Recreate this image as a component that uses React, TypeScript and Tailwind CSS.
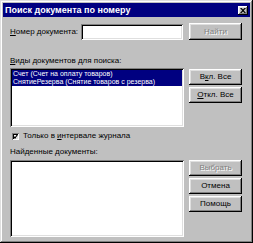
const raised =
  "shadow-[inset_-1px_-1px_#000,inset_1px_1px_#fff,inset_-2px_-2px_#808080,inset_2px_2px_#dfdfdf]";
const sunken =
  "shadow-[inset_1px_1px_#808080,inset_-1px_-1px_#fff,inset_2px_2px_#000,inset_-2px_-2px_#dfdfdf]";

type BtnProps = { children: React.ReactNode; disabled?: boolean; className?: string };

function Btn({ children, disabled, className = "" }: BtnProps) {
  return (
    <div
      className={`flex h-[16px] w-[53px] items-center justify-center bg-[#c0c0c0] ${raised} ${className} ${
        disabled ? "text-[#808080] [text-shadow:1px_1px_#fff]" : "text-black"
      }`}
    >
      {children}
    </div>
  );
}

const kinds = ["Счет (Счет на оплату товаров)", "СнятиеРезерва (Снятие товаров с резерва)"];

export default function App() {
  return (
    <div
      className={`flex h-[243px] w-[253px] flex-col bg-[#c0c0c0] p-[3px] text-[8px] leading-none text-black shadow-[inset_-1px_-1px_#000,inset_1px_1px_#dfdfdf,inset_-2px_-2px_#808080,inset_2px_2px_#fff] [font-family:'Liberation_Sans',Arial,sans-serif]`}
    >
      <div className="flex h-[14px] items-center justify-between bg-[#000080] pl-[2px] pr-[2px]">
        <span className="text-[9px] font-bold text-white">Поиск документа по номеру</span>
        <div className={`flex h-[9px] w-[10px] items-center justify-center bg-[#c0c0c0] ${raised}`}>
          <svg width="6" height="5" viewBox="0 0 6 5">
            <path d="M0 0h1.5l1.5 1.5 1.5-1.5h1.5l-2.2 2.5 2.2 2.5h-1.5l-1.5-1.5-1.5 1.5h-1.5l2.2-2.5z" fill="#000" />
          </svg>
        </div>
      </div>

      <div className="flex flex-col pl-[7px] pr-[7px]">
        <div className="mt-[6px] flex items-center">
          <span className="w-[71px]">
            <u>Н</u>омер документа:
          </span>
          <div className={`h-[16px] w-[102px] bg-white ${sunken}`} />
          <Btn disabled className="ml-[6px] h-[17px]">
            Найти
          </Btn>
        </div>

        <div className="mt-[17px]">
          <u>В</u>иды документов для поиска:
        </div>

        <div className="mt-[3px] flex gap-[5px]">
          <div className={`h-[59px] w-[174px] overflow-hidden bg-white px-[2px] pt-[2px] ${sunken}`}>
            {kinds.map((k) => (
              <div
                key={k}
                className="h-[8px] whitespace-nowrap bg-[#000080] pl-[1px] text-[7px] leading-[8px] text-white"
              >
                {k}
              </div>
            ))}
          </div>
          <div className="mt-[1px] flex flex-col gap-[2px]">
            <Btn>
              В<u>к</u>л. Все
            </Btn>
            <Btn>
              <u>О</u>ткл. Все
            </Btn>
          </div>
        </div>

        <div className="mt-[5px] flex items-center gap-[4px] pl-[2px]">
          <div className={`flex h-[7px] w-[7px] items-center justify-center bg-white ${sunken}`}>
            <svg width="5" height="5" viewBox="0 0 5 5">
              <path d="M0.5 2.5l1.5 1.5 2.5-3.5" stroke="#000" strokeWidth="1.2" fill="none" />
            </svg>
          </div>
          <span>
            Только в <u>и</u>нтервале журнала
          </span>
        </div>

        <div className="mt-[8px]">Найденные документы:</div>

        <div className="mt-[4px] flex gap-[5px]">
          <div className={`h-[77px] w-[174px] bg-white ${sunken}`} />
          <div className="flex flex-col gap-[2px]">
            <Btn disabled>Выбрать</Btn>
            <Btn>Отмена</Btn>
            <Btn>Помощь</Btn>
          </div>
        </div>
      </div>
    </div>
  );
}
